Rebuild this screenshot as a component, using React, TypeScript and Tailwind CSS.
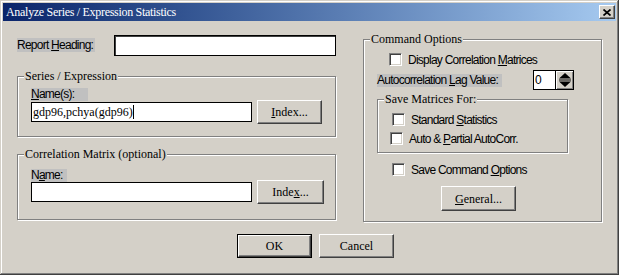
import React from 'react';

const SANS = "[font-family:'Liberation_Sans',Arial,sans-serif] text-[12px] tracking-[-0.75px] text-black";
const SERIF = "[font-family:'Liberation_Serif','Times_New_Roman',serif] text-[12px] text-black";

function Group({ label, className = '', children }: { label: string; className?: string; children?: React.ReactNode }) {
  return (
    <div className={`relative border border-[#808080] shadow-[inset_1px_1px_0_#ffffff,1px_1px_0_#ffffff] ${className}`}>
      <span className={`absolute left-[6px] top-[-8px] px-[1px] bg-[#d4d0c8] leading-[14px] whitespace-nowrap ${SERIF}`}>{label}</span>
      {children}
    </div>
  );
}

function Check({ children, className = '' }: { children: React.ReactNode; className?: string }) {
  return (
    <div className={`flex items-center h-[13px] ${className}`}>
      <span className="w-[13px] h-[13px] shrink-0 bg-white border border-t-[#808080] border-l-[#808080] border-b-white border-r-white shadow-[inset_1px_1px_0_#404040,inset_-1px_-1px_0_#d4d0c8]" />
      <span className={`ml-[6px] leading-[14px] whitespace-nowrap ${SANS}`}>{children}</span>
    </div>
  );
}

function Btn({ children, className = '', isDefault = false }: { children: React.ReactNode; className?: string; isDefault?: boolean }) {
  const face = (
    <div className="w-full h-full flex items-center justify-center bg-[#d4d0c8] border border-t-white border-l-white border-r-[#404040] border-b-[#404040] shadow-[inset_-1px_-1px_0_#808080]">
      <span className={`leading-[14px] ${SERIF}`}>{children}</span>
    </div>
  );
  if (isDefault) {
    return <div className={`border border-black ${className}`}>{face}</div>;
  }
  return <div className={className}>{face}</div>;
}

export default function App() {
  return (
    <div className="w-[619px] h-[275px] p-[3px] bg-[#d4d0c8] shadow-[inset_-1px_-1px_0_#404040,inset_1px_1px_0_#d4d0c8,inset_-2px_-2px_0_#808080,inset_2px_2px_0_#ffffff] overflow-hidden">
      {/* Title bar */}
      <div className="h-[18px] flex items-center bg-gradient-to-r from-[#0a246a] to-[#a6caf0]">
        <span className="ml-[3px] leading-[18px] text-white text-[12px] tracking-[-0.3px] [font-family:'Liberation_Serif','Times_New_Roman',serif]">
          Analyze Series / Expression Statistics
        </span>
        <div className="ml-auto mr-[1px] w-[16px] h-[14px] bg-[#d4d0c8] border border-t-white border-l-white border-r-[#404040] border-b-[#404040] shadow-[inset_-1px_-1px_0_#808080] flex items-center justify-center">
          <svg width="8" height="7" viewBox="0 0 8 7">
            <path d="M0.5 0.5 L7.5 6.5 M7.5 0.5 L0.5 6.5" stroke="#000" strokeWidth="1.7" />
          </svg>
        </div>
      </div>

      {/* Body */}
      <div className="flex items-start pl-[14px] pt-[14px]">
        {/* Left column */}
        <div className="w-[319px]">
          <div className="flex items-start h-[21px]">
            <span className={`mt-[3px] h-[14px] w-[78px] bg-[#c0c0c0] leading-[14px] whitespace-nowrap ${SANS}`}>
              Report <u>H</u>eading:
            </span>
            <div className="ml-[19px] w-[222px] h-[21px] bg-white border border-black shadow-[inset_1px_1px_0_#404040]" />
          </div>

          <Group label="Series / Expression" className="mt-[20px] h-[61px]">
            <div className="pl-[13px] pt-[11px]">
              <div className={`w-[57px] h-[13px] bg-[#c0c0c0] leading-[13px] ${SANS}`}>
                <u>N</u>ame(s):
              </div>
              <div className="mt-[-1px] flex items-center h-[24px]">
                <div className="w-[221px] h-[20px] bg-white border border-black flex items-center pl-[1px]">
                  <span className={`leading-[14px] whitespace-nowrap ${SERIF}`}>gdp96,pchya(gdp96)</span>
                  <span className="w-[1px] h-[14px] bg-black" />
                </div>
                <Btn className="ml-[5px] w-[65px] h-[24px]">
                  <u>I</u>ndex...
                </Btn>
              </div>
            </div>
          </Group>

          <Group label="Correlation Matrix (optional)" className="mt-[17px] h-[66px]">
            <div className="pl-[13px] pt-[14px]">
              <div className={`w-[36px] h-[13px] bg-[#c0c0c0] leading-[13px] ${SANS}`}>
                N<u>a</u>me:
              </div>
              <div className="mt-[-2px] flex items-center h-[24px]">
                <div className="w-[221px] h-[20px] bg-white border border-black" />
                <Btn className="ml-[5px] w-[67px] h-[24px]">
                  Inde<u>x</u>...
                </Btn>
              </div>
            </div>
          </Group>
        </div>

        {/* Right column */}
        <Group label="Command Options" className="ml-[27px] mt-[4px] w-[239px] h-[183px]">
          <div className="flex flex-col items-start">
            <Check className="mt-[13px] ml-[25px]">
              Display Correlation <u>M</u>atrices
            </Check>

            <div className="mt-[4px] ml-[13px] flex items-start h-[20px]">
              <span className={`mt-[4px] w-[125px] h-[13px] bg-[#c0c0c0] leading-[13px] whitespace-nowrap ${SANS}`}>
                Autocorrelation <u>L</u>ag Value:
              </span>
              <div className="ml-[31px] h-[20px] flex border border-black">
                <div className="w-[21px] bg-white flex items-center pl-[1px]">
                  <span className={`leading-[14px] ${SANS}`}>0</span>
                </div>
                <div className="w-[18px] border-l border-black bg-[#d4d0c8] shadow-[inset_1px_1px_0_#ffffff,inset_-1px_-1px_0_#808080] flex items-center justify-center">
                  <svg width="14" height="16" viewBox="0 0 14 16">
                    <path d="M7 1 L13 6.5 L1 6.5 Z" fill="#000" />
                    <rect x="1" y="7.5" width="12" height="1" fill="#000" />
                    <path d="M1 9.5 L13 9.5 L7 15 Z" fill="#000" />
                  </svg>
                </div>
              </div>
            </div>

            <Group label="Save Matrices For:" className="mt-[9px] ml-[13px] w-[191px] h-[54px]">
              <div className="flex flex-col items-start">
                <Check className="mt-[13px] ml-[14px]">
                  Standard <u>S</u>tatistics
                </Check>
                <Check className="mt-[6px] ml-[12px]">
                  Auto &amp; <u>P</u>artial AutoCorr.
                </Check>
              </div>
            </Group>

            <Check className="mt-[10px] ml-[28px]">
              Save Command <u>O</u>ptions
            </Check>

            <Btn className="mt-[10px] ml-[77px] w-[75px] h-[25px]">
              <u>G</u>eneral...
            </Btn>
          </div>
        </Group>
      </div>

      {/* Dialog buttons */}
      <div className="flex pl-[234px] mt-[12px] gap-[7px]">
        <Btn isDefault className="w-[75px] h-[24px]">OK</Btn>
        <Btn className="w-[75px] h-[24px]">Cancel</Btn>
      </div>
    </div>
  );
}
